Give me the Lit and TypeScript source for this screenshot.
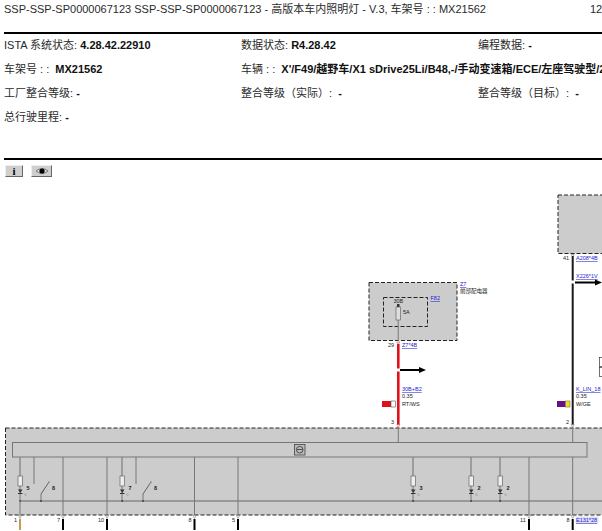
import { LitElement, html, svg, css } from "lit";
import { customElement } from "lit/decorators.js";

const INFO: [string, string][][] = [
  [["ISTA 系统状态: ", "4.28.42.22910"], ["数据状态: ", "R4.28.42"], ["编程数据: ", "-"]],
  [["车架号 : :\u00a0 ", "MX21562"], ["车辆 : :\u00a0 ", "X'/F49/越野车/X1 sDrive25Li/B48,-/手动变速箱/ECE/左座驾驶型/2"], ["", ""]],
  [["工厂整合等级: ", "-"], ["整合等级（实际）:\u00a0 ", "-"], ["整合等级（目标）:\u00a0 ", "-"]],
  [["总行驶里程: ", "-"], ["", ""], ["", ""]],
];

// lamps on the bottom rail: x of the branch and the number beside it
const LAMPS = [
  { x: 20, n: "5" },
  { x: 122, n: "7" },
  { x: 413, n: "3" },
  { x: 471, n: "2" },
  { x: 500, n: "2" },
];

// lamps with a feed line and a switch beside them
const SWITCHES = [
  { x: 34, sx: 41, n: "8" },
  { x: 136, sx: 143, n: "8" },
];

const PINS = [
  { x: 63, n: "7" },
  { x: 107, n: "10" },
  { x: 194.5, n: "8" },
  { x: 238, n: "5" },
  { x: 529, n: "11" },
];

@customElement("app-root")
export class AppRoot extends LitElement {
  static styles = css`
    :host {
      display: block;
      width: 602px;
      height: 531px;
      overflow: hidden;
      background: #fff;
      color: #2a2a2a;
      font-family: "Liberation Sans", "Noto Sans CJK SC", sans-serif;
      font-size: 11px;
    }
    .title {
      display: flex;
      justify-content: space-between;
      height: 18px;
      line-height: 18px;
      padding-left: 4px;
      white-space: nowrap;
    }
    .page-no {
      width: 12px;
      overflow: hidden;
      flex: none;
    }
    .rule {
      height: 2px;
      margin-left: 4px;
      background: #000;
    }
    .rule.top {
      margin-top: 14px;
    }
    .info {
      display: grid;
      grid-template-columns: 237px 237px 124px;
      grid-auto-rows: 24px;
      height: 125px;
      padding-left: 4px;
      align-content: start;
      margin-top: -1px;
    }
    .cell {
      line-height: 24px;
      white-space: nowrap;
    }
    .cell b {
      color: #111;
    }
    .tools {
      display: flex;
      gap: 8px;
      padding: 5px 0 0 5px;
      height: 12px;
    }
    .tool {
      display: flex;
      align-items: center;
      justify-content: center;
      width: 18px;
      height: 12px;
      box-sizing: border-box;
      background: #cfcfcf;
      border: 1px solid;
      border-color: #eee #666 #666 #eee;
      font: bold 11px "Liberation Serif", serif;
      color: #000;
    }
    .tool.eye {
      width: 21px;
    }
    svg.diagram {
      display: block;
      margin-top: 12px;
    }
    .box {
      fill: #ccc;
      stroke: #222;
      stroke-width: 1;
      stroke-dasharray: 4 2;
    }
    .inner {
      fill: none;
      stroke: #222;
      stroke-width: 1;
      stroke-dasharray: 4 2;
    }
    .thin {
      stroke: #777;
      stroke-width: 1;
      fill: none;
    }
    .rail {
      stroke: #888;
      stroke-width: 1.4;
      fill: none;
    }
    .small {
      font-size: 5.5px;
      fill: #222;
    }
    .link {
      font-size: 5.5px;
      fill: #2222cc;
      text-decoration: underline;
    }
    .num {
      font-size: 5.5px;
      font-weight: bold;
      fill: #222;
    }
  `;

  private lamp(x: number, n: string) {
    return svg`
      <line class="rail" x1=${x} y1="458" x2=${x} y2="477"></line>
      <rect x=${x - 2} y="477" width="4.5" height="10" fill="#eee" stroke="#666" stroke-width="0.7"></rect>
      <line class="thin" x1=${x} y1="487" x2=${x} y2="502"></line>
      <path d="M${x - 2} 490.5h4.5l-2.2 3.5z" fill="#333"></path>
      <rect x=${x - 2} y="494" width="4.5" height="1" fill="#333"></rect>
      <path d="M${x + 4} 496l2-1.5M${x + 5} 497l2-1.5" stroke="#888" stroke-width="0.5"></path>
      <circle cx=${x + 0.2} cy="502" r="1" fill="#444"></circle>
      <text class="num" x=${x + 6.5} y="491">${n}</text>
    `;
  }

  private switchGroup(x: number, sx: number, n: string) {
    return svg`
      <line class="thin" x1=${x} y1="458" x2=${x} y2="484"></line>
      <circle cx=${x} cy="484" r="0.9" fill="#999"></circle>
      <line x1=${sx} y1="495" x2=${sx + 8} y2="483" stroke="#555" stroke-width="0.9"></line>
      <circle cx=${sx + 8} cy="483" r="0.9" fill="#999"></circle>
      <line class="thin" x1=${sx} y1="495" x2=${sx} y2="502"></line>
      <circle cx=${sx} cy="502" r="1" fill="#444"></circle>
      <text class="num" x=${sx + 11} y="491">${n}</text>
    `;
  }

  private pin(x: number) {
    return svg`<path d="M${x - 1.5} 516.5h3l-1.5 3z" fill="#fff" stroke="#666" stroke-width="0.5"></path>`;
  }

  private diagram() {
    return svg`
      <!-- Z7 fuse box -->
      <rect class="box" x="369" y="283.5" width="88" height="58"></rect>
      <rect class="inner" x="383.5" y="298.5" width="44" height="29"></rect>
      <text class="small" x="393.5" y="303.5">30B</text>
      <rect x="396" y="308" width="4.5" height="13" fill="#ddd" stroke="#555" stroke-width="0.6"></rect>
      <rect x="397" y="305" width="2.5" height="3" fill="#333"></rect>
      <text class="small" x="403" y="315">5A</text>
      <line class="thin" x1="398.2" y1="321" x2="398.2" y2="342"></line>
      <text class="link" x="430.5" y="301">F82</text>
      <text class="link" x="460" y="287">Z7</text>
      <text class="small" x="460" y="294">前部配电器</text>

      <!-- red feed -->
      <text class="small" x="388" y="348">29</text>
      <path d="M396.8 343h3l-1.5 2.5z" fill="#fff" stroke="#c33" stroke-width="0.5"></path>
      <text class="link" x="402" y="348">Z7*4B</text>
      <line x1="398.3" y1="345" x2="398.3" y2="369.5" stroke="#e0101a" stroke-width="2.6"></line>
      <line x1="398.3" y1="372.5" x2="398.3" y2="426" stroke="#e0101a" stroke-width="2.6"></line>
      <path d="M396.8 425.5h3l-1.5 3z" fill="#fff" stroke="#c33" stroke-width="0.5"></path>
      <line x1="400" y1="371" x2="420" y2="371" stroke="#000" stroke-width="2"></line>
      <path d="M419 368l7 3-7 3z" fill="#000"></path>
      <text class="link" x="402" y="392">30B+B2</text>
      <text class="small" x="402" y="399">0.35</text>
      <text class="small" x="402" y="407">RT/WS</text>
      <rect x="382" y="402" width="9" height="6" fill="#e0101a"></rect>
      <rect x="391" y="402" width="4.5" height="6" fill="#fff" stroke="#555" stroke-width="0.6"></rect>
      <text class="small" x="391" y="425">3</text>

      <!-- right module -->
      <rect class="box" x="558" y="196" width="60" height="58.5"></rect>
      <text class="small" x="563" y="261">41</text>
      <path d="M571.2 255.5h3l-1.5 3z" fill="#fff" stroke="#666" stroke-width="0.5"></path>
      <text class="link" x="576" y="261">A208*4B</text>
      <text class="link" x="576" y="279">X226*1V</text>
      <line x1="572.7" y1="257" x2="572.7" y2="281.5" stroke="#1a1a1a" stroke-width="2"></line>
      <line x1="572.7" y1="284.5" x2="572.7" y2="426" stroke="#1a1a1a" stroke-width="2"></line>
      <path d="M571.2 425.5h3l-1.5 3z" fill="#fff" stroke="#666" stroke-width="0.5"></path>
      <line x1="575" y1="283.5" x2="596" y2="283.5" stroke="#000" stroke-width="2"></line>
      <path d="M595 280.5l7 3-7 3z" fill="#000"></path>
      <rect x="599.5" y="358.5" width="10" height="9" fill="#fff" stroke="#333" stroke-width="0.7"></rect>
      <rect x="599.5" y="368.5" width="10" height="9" fill="#fff" stroke="#333" stroke-width="0.7"></rect>
      <text class="link" x="576" y="392">K_LIN_18</text>
      <text class="small" x="576" y="399">0.35</text>
      <text class="small" x="576" y="407">W/GE</text>
      <rect x="557" y="402" width="8.5" height="6" fill="#6a0f8a"></rect>
      <rect x="565.5" y="402" width="4.5" height="6" fill="#f5e11a" stroke="#555" stroke-width="0.5"></rect>
      <text class="small" x="566" y="425">2</text>

      <!-- main module -->
      <rect class="box" x="5.5" y="429" width="620" height="87"></rect>
      <rect x="12.5" y="443.5" width="574.5" height="14.5" fill="#ccc" stroke="#777" stroke-width="1"></rect>
      <line class="thin" x1="398.3" y1="429" x2="398.3" y2="443.5"></line>
      <line class="thin" x1="572.7" y1="429" x2="572.7" y2="443.5"></line>
      <line class="rail" x1="20" y1="502" x2="602" y2="502"></line>

      <!-- network symbol on the bus -->
      <rect x="294.5" y="445.5" width="10.5" height="10.5" fill="#bbb" stroke="#444" stroke-width="0.8"></rect>
      <circle cx="299.7" cy="450.7" r="3.3" fill="none" stroke="#333" stroke-width="0.8"></circle>
      <path d="M297 450.5h5.5" stroke="#333" stroke-width="0.8"></path>

      ${LAMPS.map((l) => this.lamp(l.x, l.n))}
      ${SWITCHES.map((s) => this.switchGroup(s.x, s.sx, s.n))}
      ${PINS.map(
        (p) => svg`
          <line class="thin" x1=${p.x} y1="458" x2=${p.x} y2="516"></line>
          ${this.pin(p.x)}
          <line x1=${p.x} y1="520" x2=${p.x} y2="531" stroke="#000" stroke-width="2"></line>
          <text class="small" x=${p.x - 6 - (p.n.length - 1) * 3} y="523">${p.n}</text>
        `,
      )}

      <!-- first and last pins differ -->
      ${this.pin(20)}
      <line class="thin" x1="20" y1="502" x2="20" y2="516"></line>
      <line x1="20" y1="520" x2="20" y2="531" stroke="#c89a50" stroke-width="2"></line>
      <text class="small" x="14" y="523">1</text>
      <line class="thin" x1="572.7" y1="458" x2="572.7" y2="516"></line>
      ${this.pin(572.7)}
      <line x1="572.7" y1="520" x2="572.7" y2="531" stroke="#000" stroke-width="2"></line>
      <text class="small" x="566.5" y="523">8</text>
      <rect x="575.5" y="517.5" width="23" height="7" fill="#dfe0f5"></rect>
      <text class="link" x="576" y="523">E131*28</text>
    `;
  }

  protected render() {
    return html`
      <div class="title">
        <span>SSP-SSP-SP0000067123 SSP-SSP-SP0000067123 - 高版本车内照明灯 - V.3, 车架号 : : MX21562</span>
        <span class="page-no">12</span>
      </div>
      <div class="rule top"></div>
      <div class="info">
        ${INFO.flat().map(
          ([label, value]) => html`<div class="cell">${label}<b>${value}</b></div>`,
        )}
      </div>
      <div class="rule"></div>
      <div class="tools">
        <div class="tool">i</div>
        <div class="tool eye">
          <svg width="14" height="8" viewBox="0 0 14 8" aria-hidden="true">
            <path d="M1 4q6-5 12 0q-6 5-12 0z" fill="#ddd" stroke="#555" stroke-width="0.7"></path>
            <circle cx="7" cy="4" r="2.6" fill="#000"></circle>
          </svg>
        </div>
      </div>
      <svg class="diagram" width="602" height="341" viewBox="0 190 602 341">${this.diagram()}</svg>
    `;
  }
}

declare global {
  interface HTMLElementTagNameMap {
    "app-root": AppRoot;
  }
}
